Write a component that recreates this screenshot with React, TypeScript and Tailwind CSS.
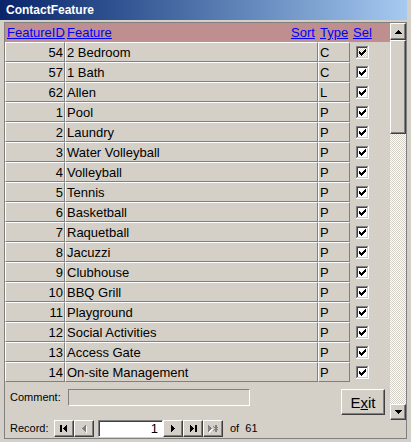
const rows: [number, string, string][] = [
  [54, '2 Bedroom', 'C'],
  [57, '1 Bath', 'C'],
  [62, 'Allen', 'L'],
  [1, 'Pool', 'P'],
  [2, 'Laundry', 'P'],
  [3, 'Water Volleyball', 'P'],
  [4, 'Volleyball', 'P'],
  [5, 'Tennis', 'P'],
  [6, 'Basketball', 'P'],
  [7, 'Raquetball', 'P'],
  [8, 'Jacuzzi', 'P'],
  [9, 'Clubhouse', 'P'],
  [10, 'BBQ Grill', 'P'],
  [11, 'Playground', 'P'],
  [12, 'Social Activities', 'P'],
  [13, 'Access Gate', 'P'],
  [14, 'On-site Management', 'P'],
];

const raised =
  'bg-[#d4d0c8] border border-t-white border-l-white border-r-[#404040] border-b-[#404040] shadow-[inset_-1px_-1px_0_#808080]';

const checkPixels = [
  '......X',
  '.....XX',
  'X...XXX',
  'XX.XXX.',
  'XXXXX..',
  '.XXX...',
  '..X....',
];

function CheckBox({ focused }: { focused?: boolean }) {
  return (
    <svg width="13" height="13" viewBox="0 0 13 13" shapeRendering="crispEdges">
      <defs>
        <pattern id="dots" width="2" height="2" patternUnits="userSpaceOnUse">
          <rect width="2" height="2" fill="#ffffff" />
          <rect width="1" height="1" fill="#d4d0c8" />
          <rect x="1" y="1" width="1" height="1" fill="#d4d0c8" />
        </pattern>
      </defs>
      <rect x="0" y="0" width="13" height="13" fill="#ffffff" />
      <rect x="0" y="0" width="12" height="12" fill="#808080" />
      <rect x="1" y="1" width="11" height="11" fill="#d4d0c8" />
      <rect x="1" y="1" width="10" height="10" fill="#404040" />
      <rect x="2" y="2" width="9" height="9" fill={focused ? 'url(#dots)' : '#ffffff'} />
      {checkPixels.map((line, y) =>
        line.split('').map((c, x) =>
          c === 'X' ? <rect key={`${x}-${y}`} x={3 + x} y={3 + y} width="1" height="1" fill="#000" /> : null
        )
      )}
    </svg>
  );
}

function Arrow({ dir }: { dir: 'up' | 'down' }) {
  return (
    <svg width="7" height="4" viewBox="0 0 7 4" shapeRendering="crispEdges">
      {dir === 'up' ? (
        <path d="M3 0h1v1h1v1h1v1h1v1H0V3h1V2h1V1h1z" fill="#000" />
      ) : (
        <path d="M0 0h7v1H6v1H5v1H4v1H3V3H2V2H1V1H0z" fill="#000" />
      )}
    </svg>
  );
}

function NavGlyph({ kind }: { kind: 'first' | 'prev' | 'next' | 'last' | 'new' }) {
  return (
    <svg width="14" height="11" viewBox="0 0 14 11" shapeRendering="crispEdges">
      {kind === 'first' && (
        <>
          <rect x="3" y="2" width="2" height="7" fill="#000" />
          <path d="M10 1v9L6 5.5z" fill="#000" />
        </>
      )}
      {kind === 'prev' && (
        <>
          <path d="M10 2v9L6 6.5z" fill="#fff" />
          <path d="M9 1v9L5 5.5z" fill="#808080" />
        </>
      )}
      {kind === 'next' && <path d="M5 1v9l4-4.5z" fill="#000" />}
      {kind === 'last' && (
        <>
          <path d="M4 1v9l4-4.5z" fill="#000" />
          <rect x="9" y="2" width="2" height="7" fill="#000" />
        </>
      )}
      {kind === 'new' && (
        <>
          <path d="M3 2v9l4-4.5z" fill="#fff" />
          <path d="M2 1v9l4-4.5z" fill="#808080" />
          <path d="M10 2v7M7.5 3.5l5 4M12.5 3.5l-5 4" stroke="#808080" strokeWidth="1.2" />
        </>
      )}
    </svg>
  );
}

export default function App() {
  return (
    <div className="w-[411px] h-[442px] bg-[#d4d0c8] flex flex-col overflow-hidden font-['Liberation_Sans',Arial,sans-serif] text-black">
      <div className="h-[20px] mr-[4px] bg-gradient-to-r from-[#0a246a] to-[#a6caf0] flex items-center pl-[6px]">
        <span className="text-white font-bold text-[12px] leading-none">ContactFeature</span>
      </div>

      <div className="mt-[2px] ml-[4px] w-[403px] h-[417px] border border-[#808080] flex flex-col">
        <div className="flex h-[397px]">
          <div className="w-[385px] flex flex-col">
            <div className="h-[19px] bg-[#bf8f8f] flex items-center text-[13px] text-[#0000ff] underline leading-none">
              <div className="w-[60px] pl-[2px]">FeatureID</div>
              <div className="w-[224px] pl-[2px]">Feature</div>
              <div className="w-[29px] pl-[2px]">Sort</div>
              <div className="w-[32px] pl-[2px]">Type</div>
              <div className="w-[40px] pl-[3px]">Sel</div>
            </div>

            {rows.map(([id, name, type], i) => (
              <div key={id} className="flex h-[20px] text-[13px] leading-none">
                <div className="w-[60px] border border-t-white border-l-white border-r-[#808080] border-b-[#808080] flex items-center justify-end pr-[1px]">
                  {id}
                </div>
                <div className="w-[253px] border border-t-white border-l-white border-r-[#808080] border-b-[#808080] flex items-center pl-[1px]">
                  {name}
                </div>
                <div className="w-[32px] border border-t-white border-l-white border-r-[#808080] border-b-[#808080] flex items-center pl-[1px]">
                  {type}
                </div>
                <div className="w-[40px] flex items-center pl-[6px]">
                  <CheckBox focused={i === 0} />
                </div>
              </div>
            ))}

            <div className="flex-1 flex items-start pt-[7px] text-[11px]">
              <div className="w-[63px] h-[17px] pl-[5px] flex items-center">Comment:</div>
              <div className="w-[182px] h-[17px] border border-t-[#808080] border-l-[#808080] border-r-white border-b-white" />
              <button className={`ml-auto mr-[5px] w-[44px] h-[26px] ${raised} text-[15px] leading-none flex items-center justify-center`}>
                E<span className="underline">x</span>it
              </button>
            </div>
          </div>

          <div className="w-[16px] flex flex-col">
            <div className={`h-[17px] ${raised} flex items-center justify-center`}>
              <Arrow dir="up" />
            </div>
            <div className={`h-[94px] ${raised}`} />
            <div className="flex-1 bg-[repeating-conic-gradient(#ffffff_0_25%,#d4d0c8_0_50%)] bg-[length:2px_2px]" />
            <div className={`h-[16px] ${raised} flex items-center justify-center`}>
              <Arrow dir="down" />
            </div>
          </div>
        </div>

        <div className="h-[18px] flex items-start text-[11px]">
          <div className="w-[49px] h-[17px] pl-[5px] flex items-center">Record:</div>
          <div className={`w-[20px] h-[17px] ${raised} flex items-center justify-center`}>
            <NavGlyph kind="first" />
          </div>
          <div className={`w-[20px] h-[17px] ${raised} flex items-center justify-center`}>
            <NavGlyph kind="prev" />
          </div>
          <div className="ml-[4px] w-[65px] h-[17px] bg-white border border-t-[#808080] border-l-[#808080] border-r-white border-b-white shadow-[inset_1px_1px_0_#404040] flex items-center justify-end pr-[4px] text-[13px]">
            1
          </div>
          <div className={`w-[20px] h-[17px] ${raised} flex items-center justify-center`}>
            <NavGlyph kind="next" />
          </div>
          <div className={`w-[20px] h-[17px] ${raised} flex items-center justify-center`}>
            <NavGlyph kind="last" />
          </div>
          <div className={`w-[20px] h-[17px] ${raised} flex items-center justify-center`}>
            <NavGlyph kind="new" />
          </div>
          <div className="h-[17px] pl-[7px] flex items-center">of&nbsp;&nbsp;61</div>
        </div>
      </div>
    </div>
  );
}
